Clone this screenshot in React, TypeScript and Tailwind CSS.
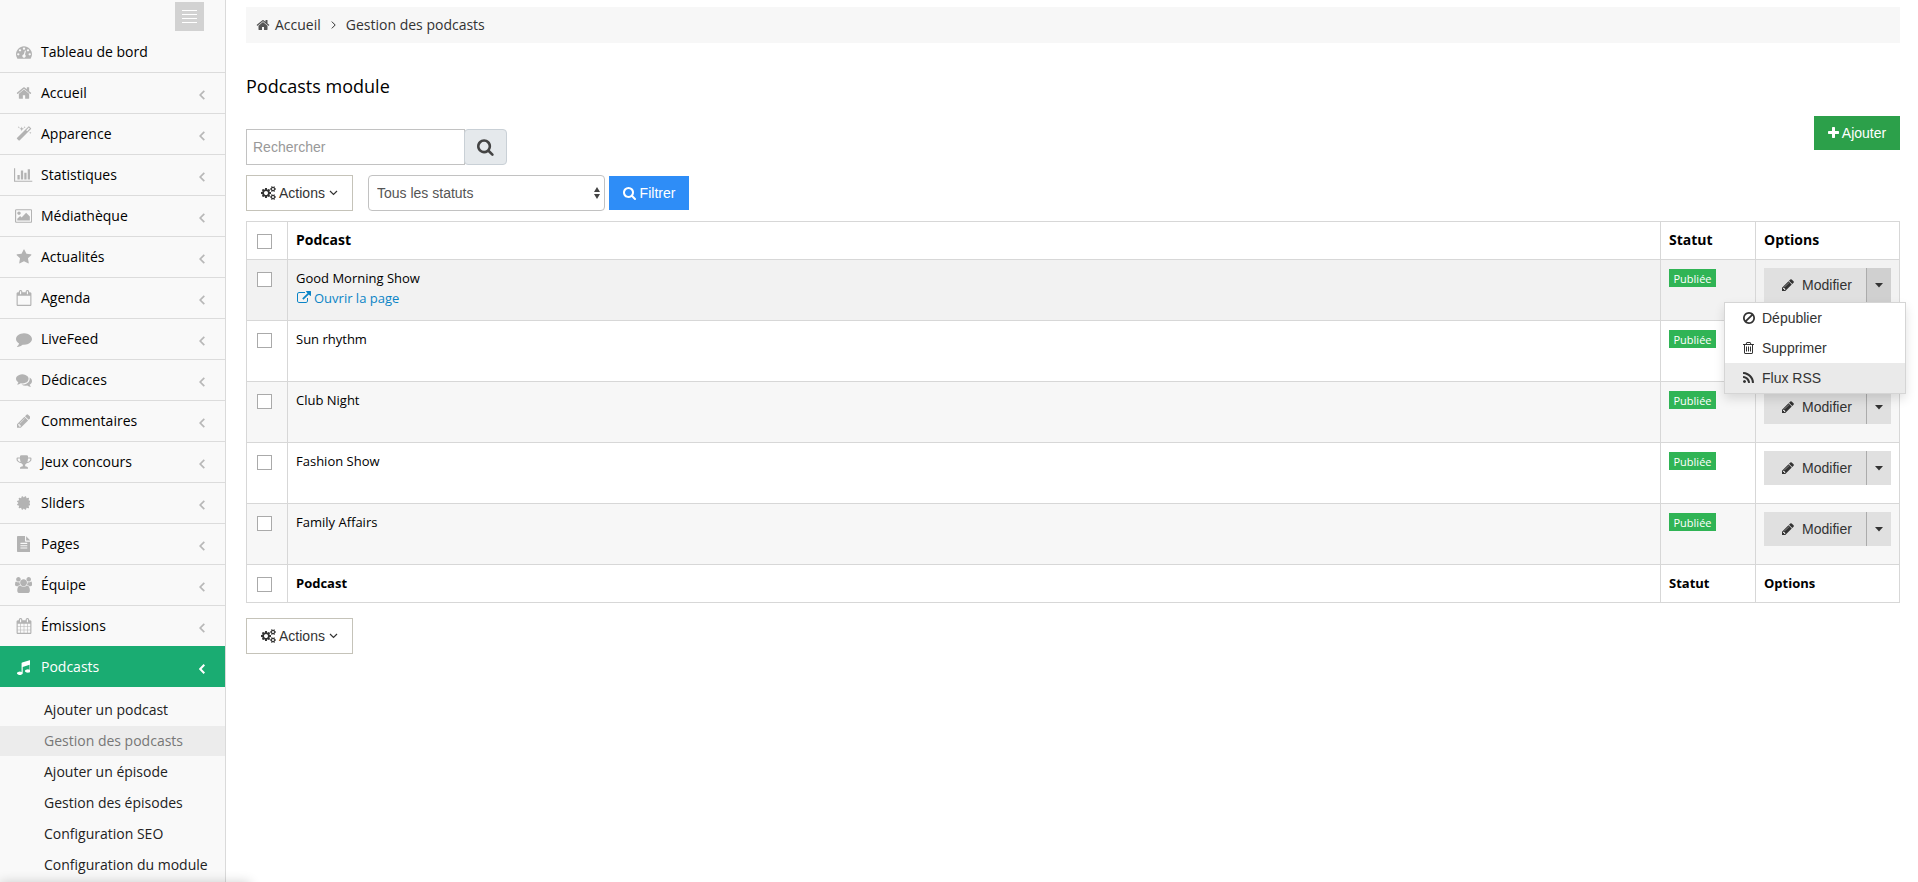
import type { ReactNode } from "react";

// Font Awesome 4 outlines: [viewBox min-x, viewBox width, path]. 1792 units = 1em.
const ICONS = {
  dashboard: [0, 1792, "M384 1152q0-53-37.5-90.5t-90.5-37.5-90.5 37.5-37.5 90.5 37.5 90.5 90.5 37.5 90.5-37.5 37.5-90.5zm192-448q0-53-37.5-90.5t-90.5-37.5-90.5 37.5-37.5 90.5 37.5 90.5 90.5 37.5 90.5-37.5 37.5-90.5zm428 481l101-382q6-26-7.5-48.5t-38.5-29.5-48 6.5-30 39.5l-101 382q-60 5-107 43.5t-63 98.5q-20 77 20 146t117 89 146-20 89-117q16-60-6-117t-72-91zm660-33q0-53-37.5-90.5t-90.5-37.5-90.5 37.5-37.5 90.5 37.5 90.5 90.5 37.5 90.5-37.5 37.5-90.5zm-640-640q0-53-37.5-90.5t-90.5-37.5-90.5 37.5-37.5 90.5 37.5 90.5 90.5 37.5 90.5-37.5 37.5-90.5zm448 192q0-53-37.5-90.5t-90.5-37.5-90.5 37.5-37.5 90.5 37.5 90.5 90.5 37.5 90.5-37.5 37.5-90.5zm320 448q0 261-141 483-19 29-54 29h-1402q-35 0-54-29-141-221-141-483 0-182 71-348t191-286 286-191 348-71 348 71 286 191 191 286 71 348z"],
  home: [0, 1792, "M1472 992v480q0 26-19 45t-45 19h-384v-384h-256v384h-384q-26 0-45-19t-19-45v-480q0-1 .5-3t.5-3l575-474 575 474q1 2 1 6zm223-69l-62 74q-8 9-21 11h-3q-13 0-21-7l-692-577-692 577q-12 8-24 7-13-2-21-11l-62-74q-8-10-7-23.5t11-21.5l719-599q32-26 76-26t76 26l244 204v-195q0-14 9-23t23-9h192q14 0 23 9t9 23v408l219 182q10 8 11 21.5t-7 23.5z"],
  magic: [0, 1792, "M1254 581l293-293-107-107-293 293zm447-293q0 27-18 45l-1286 1286q-18 18-45 18t-45-18l-198-198q-18-18-18-45t18-45l1286-1286q18-18 45-18t45 18l198 198q18 18 18 45zm-1351-190l98 30-98 30-30 98-30-98-98-30 98-30 30-98zm350 162l196 60-196 60-60 196-60-196-196-60 196-60 60-196zm930 478l98 30-98 30-30 98-30-98-98-30 98-30 30-98zm-640-640l98 30-98 30-30 98-30-98-98-30 98-30 30-98z"],
  chart: [0, 2048, "M640 896v512h-256v-512h256zm384-512v1024h-256v-1024h256zm1024 1152v128h-2048v-1536h128v1408h1920zm-640-896v768h-256v-768h256zm384-384v1152h-256v-1152h256z"],
  image: [-64, 1920, "M576 576q0 80-56 136t-136 56-136-56-56-136 56-136 136-56 136 56 56 136zm1024 384v448h-1408v-192l320-320 160 160 512-512zm96-704h-1600q-13 0-22.5 9.5t-9.5 22.5v1216q0 13 9.5 22.5t22.5 9.5h1600q13 0 22.5-9.5t9.5-22.5v-1216q0-13-9.5-22.5t-22.5-9.5zm160 32v1216q0 66-47 113t-113 47h-1600q-66 0-113-47t-47-113v-1216q0-66 47-113t113-47h1600q66 0 113 47t47 113z"],
  star: [0, 1792, "M1728 647q0 22-26 48l-363 354 86 500q1 7 1 20 0 21-10.5 35.5t-30.5 14.5q-19 0-40-12l-449-236-449 236q-22 12-40 12-21 0-31.5-14.5t-10.5-35.5q0-6 2-20l86-500-364-354q-25-27-25-48 0-37 56-46l502-73 225-455q19-41 49-41t49 41l225 455 502 73q56 9 56 46z"],
  calendarEmpty: [0, 1792, "M192 1664h1408v-1024h-1408v1024zm384-1216v-288q0-14-9-23t-23-9h-64q-14 0-23 9t-9 23v288q0 14 9 23t23 9h64q14 0 23-9t9-23zm768 0v-288q0-14-9-23t-23-9h-64q-14 0-23 9t-9 23v288q0 14 9 23t23 9h64q14 0 23-9t9-23zm384-64v1280q0 52-38 90t-90 38h-1408q-52 0-90-38t-38-90v-1280q0-52 38-90t90-38h128v-96q0-66 47-113t113-47h64q66 0 113 47t47 113v96h384v-96q0-66 47-113t113-47h64q66 0 113 47t47 113v96h128q52 0 90 38t38 90z"],
  comment: [0, 1792, "M1792 896q0 174-120 321.5t-326 233-450 85.5q-70 0-145-8-198 175-460 242-49 14-114 22-17 2-30.5-9t-17.5-29v-1q-3-4-.5-12t2-10 4.5-9.5l6-9 7-8.5 8-9q7-8 31-34.5t34.5-38 31-39.5 32.5-51 27-59 26-76q-157-89-247.5-220t-90.5-281q0-130 71-248.5t191-204.5 286-136.5 348-50.5q244 0 450 85.5t326 233 120 321.5z"],
  comments: [0, 1792, "M1408 768q0 139-94 257t-256.5 186.5-353.5 68.5q-86 0-176-16-124 88-278 128-36 9-86 16h-3q-11 0-20.5-8t-11.5-21q-1-3-1-6.5t.5-6.5 2-6l2.5-5 3.5-5.5 4-5 4.5-5 4-4.5q5-6 23-25t26-29.5 22.5-29 25-38.5 20.5-44q-124-72-195-177t-71-224q0-139 94-257t256.5-186.5 353.5-68.5 353.5 68.5 256.5 186.5 94 257zm384 256q0 120-71 224.5t-195 176.5q10 24 20.5 44t25 38.5 22.5 29 26 29.5 23 25q1 1 4 4.5t4.5 5 4 5 3.5 5.5l2.5 5 2 6 .5 6.5-1 6.5q-3 14-13 22t-22 7q-50-7-86-16-154-40-278-128-90 16-176 16-271 0-472-132 58 4 88 4 161 0 309-45t264-129q125-92 192-212t67-254q0-77-23-152 129 71 204 178t75 230z"],
  pencil: [128, 1536, "M491 1536l91-91-235-235-91 91v107h128v128h107zm523-928q0-22-22-22-10 0-17 7l-542 542q-7 7-7 17 0 22 22 22 10 0 17-7l542-542q7-7 7-17zm-54-192l416 416-832 832h-416v-416zm683 96q0 53-37 90l-166 166-416-416 166-165q36-38 90-38 53 0 91 38l235 234q37 39 37 91z"],
  trophy: [0, 1792, "M522 883q-74-162-74-371h-256v96q0 78 94.5 162t235.5 113zm1078-275v-96h-256q0 209-74 371 141-29 235.5-113t94.5-162zm128-128v128q0 71-41.5 143t-112 130-173 97.5-215.5 44.5q-42 54-95 95-38 34-52.5 72.5t-14.5 89.5q0 54 30.5 91t97.5 37q75 0 133.5 45.5t58.5 114.5v64q0 14-9 23t-23 9h-832q-14 0-23-9t-9-23v-64q0-69 58.5-114.5t133.5-45.5q67 0 97.5-37t30.5-91q0-51-14.5-89.5t-52.5-72.5q-53-41-95-95-113-5-215.5-44.5t-173-97.5-112-130-41.5-143v-128q0-40 28-68t68-28h288v-96q0-66 47-113t113-47h576q66 0 113 47t47 113v96h288q40 0 68 28t28 68z"],
  certificate: [128, 1536, "M1504 896l138 135q30 28 20 70-12 41-52 51l-188 48 53 186q12 41-19 70-29 31-70 19l-186-53-48 188q-10 40-51 52-12 2-19 2-31 0-51-22l-135-138-135 138q-28 30-70 20-41-11-51-52l-48-188-186 53q-41 12-70-19-31-29-19-70l53-186-188-48q-40-10-52-51-10-42 20-70l138-135-138-135q-30-28-20-70 12-41 52-51l188-48-53-186q-12-41 19-70 29-31 70-19l186 53 48-188q10-41 51-51 41-12 70 19l135 139 135-139q29-30 70-19 41 10 51 51l48 188 186-53q41-12 70 19 31 29 19 70l-53 186 188 48q40 10 52 51 10 42-20 70z"],
  file: [128, 1536, "M1596 476q14 14 28 36h-472v-472q22 14 36 28zm-476 164h544v1056q0 40-28 68t-68 28h-1344q-40 0-68-28t-28-68v-1600q0-40 28-68t68-28h800v544q0 40 28 68t68 28zm160 736v-64q0-14-9-23t-23-9h-704q-14 0-23 9t-9 23v64q0 14 9 23t23 9h704q14 0 23-9t9-23zm0-256v-64q0-14-9-23t-23-9h-704q-14 0-23 9t-9 23v64q0 14 9 23t23 9h704q14 0 23-9t9-23zm0-256v-64q0-14-9-23t-23-9h-704q-14 0-23 9t-9 23v64q0 14 9 23t23 9h704q14 0 23-9t9-23z"],
  users: [-64, 1920, "M529 896q-162 5-265 128h-134q-82 0-138-40.5t-56-118.5q0-353 124-353 6 0 43.5 21t97.5 42.5 119 21.5q67 0 133-23-5 37-5 66 0 139 81 256zm1071 637q0 120-73 189.5t-194 69.5h-874q-121 0-194-69.5t-73-189.5q0-53 3.5-103.5t14-109 26.5-108.5 43-97.5 62-81 85.5-53.5 111.5-20q10 0 43 21.5t73 48 107 48 135 21.5 135-21.5 107-48 73-48 43-21.5q61 0 111.5 20t85.5 53.5 62 81 43 97.5 26.5 108.5 14 109 3.5 103.5zm-1024-1277q0 106-75 181t-181 75-181-75-75-181 75-181 181-75 181 75 75 181zm704 384q0 159-112.5 271.5t-271.5 112.5-271.5-112.5-112.5-271.5 112.5-271.5 271.5-112.5 271.5 112.5 112.5 271.5zm576 225q0 78-56 118.5t-138 40.5h-134q-103-123-265-128 81-117 81-256 0-29-5-66 66 23 133 23 59 0 119-21.5t97.5-42.5 43.5-21q124 0 124 353zm-128-609q0 106-75 181t-181 75-181-75-75-181 75-181 181-75 181 75 75 181z"],
  calendar: [0, 1792, "M192 1664h288v-288h-288v288zm352 0h320v-288h-320v288zm-352-352h288v-320h-288v320zm352 0h320v-320h-320v320zm-352-384h288v-288h-288v288zm736 736h320v-288h-320v288zm-384-736h320v-288h-320v288zm768 736h288v-288h-288v288zm-384-352h320v-320h-320v320zm-352-864v-288q0-13-9.5-22.5t-22.5-9.5h-64q-13 0-22.5 9.5t-9.5 22.5v288q0 13 9.5 22.5t22.5 9.5h64q13 0 22.5-9.5t9.5-22.5zm736 864h288v-320h-288v320zm-384-384h320v-288h-320v288zm384 0h288v-288h-288v288zm32-480v-288q0-13-9.5-22.5t-22.5-9.5h-64q-13 0-22.5 9.5t-9.5 22.5v288q0 13 9.5 22.5t22.5 9.5h64q13 0 22.5-9.5t9.5-22.5zm384-64v1280q0 52-38 90t-90 38h-1408q-52 0-90-38t-38-90v-1280q0-52 38-90t90-38h128v-96q0-66 47-113t113-47h64q66 0 113 47t47 113v96h384v-96q0-66 47-113t113-47h64q66 0 113 47t47 113v96h128q52 0 90 38t38 90z"],
  music: [128, 1536, "M1664 224v1120q0 50-34 89t-86 60.5-103.5 32-96.5 10.5-96.5-10.5-103.5-32-86-60.5-34-89 34-89 86-60.5 103.5-32 96.5-10.5q105 0 192 39v-537l-768 237v709q0 50-34 89t-86 60.5-103.5 32-96.5 10.5-96.5-10.5-103.5-32-86-60.5-34-89 34-89 86-60.5 103.5-32 96.5-10.5q105 0 192 39v-967q0-31 19-56.5t49-35.5l832-256q12-4 28-4 40 0 68 28t28 68z"],
  search: [64, 1664, "M1216 832q0-185-131.5-316.5t-316.5-131.5-316.5 131.5-131.5 316.5 131.5 316.5 316.5 131.5 316.5-131.5 131.5-316.5zm512 832q0 52-38 90t-90 38q-54 0-90-38l-343-342q-179 124-399 124-143 0-273.5-55.5t-225-150-150-225-55.5-273.5 55.5-273.5 150-225 225-150 273.5-55.5 273.5 55.5 225 150 150 225 55.5 273.5q0 220-124 399l343 343q37 37 37 90z"],
  plus: [192, 1408, "M1600 736v192q0 40-28 68t-68 28h-416v416q0 40-28 68t-68 28h-192q-40 0-68-28t-28-68v-416h-416q-40 0-68-28t-28-68v-192q0-40 28-68t68-28h416v-416q0-40 28-68t68-28h192q40 0 68 28t28 68v416h416q40 0 68 28t28 68z"],
  external: [0, 1792, "M1408 928v320q0 119-84.5 203.5t-203.5 84.5h-832q-119 0-203.5-84.5t-84.5-203.5v-832q0-119 84.5-203.5t203.5-84.5h704q14 0 23 9t9 23v64q0 14-9 23t-23 9h-704q-66 0-113 47t-47 113v832q0 66 47 113t113 47h832q66 0 113-47t47-113v-320q0-14 9-23t23-9h64q14 0 23 9t9 23zm384-864v512q0 26-19 45t-45 19-45-19l-176-176-652 652q-10 10-23 10t-23-10l-114-114q-10-10-10-23t10-23l652-652-176-176q-19-19-19-45t19-45 45-19h512q26 0 45 19t19 45z"],
  cogs: [-64, 1920, "M832 896q0-106-75-181t-181-75-181 75-75 181 75 181 181 75 181-75 75-181zm768 512q0-52-38-90t-90-38-90 38-38 90q0 53 37.5 90.5t90.5 37.5 90.5-37.5 37.5-90.5zm0-1024q0-52-38-90t-90-38-90 38-38 90q0 53 37.5 90.5t90.5 37.5 90.5-37.5 37.5-90.5zm-384 421v185q0 10-7 19.5t-16 10.5l-155 24q-11 35-32 76 34 48 90 115 7 11 7 20 0 12-7 19-23 30-82.5 89.5t-78.5 59.5q-11 0-21-7l-115-90q-37 19-77 31-11 108-23 155-7 24-30 24h-186q-11 0-20-7.5t-10-17.5l-23-153q-34-10-75-31l-118 89q-7 7-20 7-11 0-21-8-144-133-144-160 0-9 7-19 10-14 41-53t47-61q-23-44-35-82l-152-24q-10-1-17-9.5t-7-19.5v-185q0-10 7-19.5t16-10.5l155-24q11-35 32-76-34-48-90-115-7-11-7-20 0-12 7-20 22-30 82-89t79-59q11 0 21 7l115 90q34-18 77-32 11-108 23-154 7-24 30-24h186q11 0 20 7.5t10 17.5l23 153q34 10 75 31l118-89q8-7 20-7 11 0 21 8 144 133 144 160 0 8-7 19-12 16-42 54t-45 60q23 48 34 82l152 23q10 2 17 10.5t7 19.5zm640 533v140q0 16-149 31-12 27-30 52 51 113 51 138 0 4-4 7-122 71-124 71-8 0-46-47t-52-68q-20 2-30 2t-30-2q-14 21-52 68t-46 47q-2 0-124-71-4-3-4-7 0-25 51-138-18-25-30-52-149-15-149-31v-140q0-16 149-31 13-29 30-52-51-113-51-138 0-4 4-7 4-2 35-20t59-34 30-16q8 0 46 46.5t52 67.5q20-2 30-2t30 2q51-71 92-112l6-2q4 0 124 70 4 3 4 7 0 25-51 138 17 23 30 52 149 15 149 31zm0-1024v140q0 16-149 31-12 27-30 52 51 113 51 138 0 4-4 7-122 71-124 71-8 0-46-47t-52-68q-20 2-30 2t-30-2q-14 21-52 68t-46 47q-2 0-124-71-4-3-4-7 0-25 51-138-18-25-30-52-149-15-149-31v-140q0-16 149-31 13-29 30-52-51-113-51-138 0-4 4-7 4-2 35-20t59-34 30-16q8 0 46 46.5t52 67.5q20-2 30-2t30 2q51-71 92-112l6-2q4 0 124 70 4 3 4 7 0 25-51 138 17 23 30 52 149 15 149 31z"],
  ban: [128, 1536, "M1440 893q0-161-87-295l-754 753q137 89 297 89 111 0 211.5-43.5t173.5-116.5 116-174.5 43-212.5zm-999 299l755-754q-135-91-300-91-148 0-273 73t-198 199-73 274q0 162 89 299zm1223-299q0 157-61 300t-163.5 246-245 164-298.5 61-298.5-61-245-164-163.5-246-61-300 61-299.5 163.5-245.5 245-164 298.5-61 298.5 61 245 164 163.5 245.5 61 299.5z"],
  trash: [192, 1408, "M704 736v576q0 14-9 23t-23 9h-64q-14 0-23-9t-9-23v-576q0-14 9-23t23-9h64q14 0 23 9t9 23zm256 0v576q0 14-9 23t-23 9h-64q-14 0-23-9t-9-23v-576q0-14 9-23t23-9h64q14 0 23 9t9 23zm256 0v576q0 14-9 23t-23 9h-64q-14 0-23-9t-9-23v-576q0-14 9-23t23-9h64q14 0 23 9t9 23zm128 724v-948h-896v948q0 22 7 40.5t14.5 27 10.5 8.5h832q3 0 10.5-8.5t14.5-27 7-40.5zm-672-1076h448l-48-117q-7-9-17-11h-317q-10 2-17 11zm928 32v64q0 14-9 23t-23 9h-96v948q0 83-47 143.5t-113 60.5h-832q-66 0-113-58.5t-47-141.5v-952h-96q-14 0-23-9t-9-23v-64q0-14 9-23t23-9h309l70-167q15-37 54-63t79-26h320q40 0 79 26t54 63l70 167h309q14 0 23 9t9 23z"],
  rss: [192, 1408, "M576 1344q0 80-56 136t-136 56-136-56-56-136 56-136 136-56 136 56 56 136zm512 123q2 28-17 48-18 21-47 21h-135q-25 0-43-16.5t-20-41.5q-22-229-184.5-391.5t-391.5-184.5q-25-2-41.5-20t-16.5-43v-135q0-29 21-47 17-17 43-17h5q160 13 306 80.5t259 181.5q114 113 181.5 259t80.5 306zm512 2q2 27-18 47-18 20-46 20h-143q-26 0-44.5-17.5t-19.5-42.5q-12-215-101-408.5t-231.5-336-336-231.5-408.5-102q-25-1-42.5-19.5t-17.5-43.5v-143q0-28 20-46 18-18 44-18h3q262 13 501.5 120t425.5 294q187 186 294 425.5t120 501.5z"],
} satisfies Record<string, [number, number, string]>;

type IconName = keyof typeof ICONS;

function Icon({ name, size = 14, className = "" }: { name: IconName; size?: number; className?: string }) {
  const [x, width, d] = ICONS[name];
  return (
    <svg
      viewBox={`${x} 0 ${width} 1792`}
      width={(size * width) / 1792}
      height={size}
      fill="currentColor"
      aria-hidden="true"
      className={`shrink-0 ${className}`}
    >
      <path d={d} />
    </svg>
  );
}

const MENU: { label: string; icon: IconName }[] = [
  { label: "Tableau de bord", icon: "dashboard" },
  { label: "Accueil", icon: "home" },
  { label: "Apparence", icon: "magic" },
  { label: "Statistiques", icon: "chart" },
  { label: "Médiathèque", icon: "image" },
  { label: "Actualités", icon: "star" },
  { label: "Agenda", icon: "calendarEmpty" },
  { label: "LiveFeed", icon: "comment" },
  { label: "Dédicaces", icon: "comments" },
  { label: "Commentaires", icon: "pencil" },
  { label: "Jeux concours", icon: "trophy" },
  { label: "Sliders", icon: "certificate" },
  { label: "Pages", icon: "file" },
  { label: "Équipe", icon: "users" },
  { label: "Émissions", icon: "calendar" },
  { label: "Podcasts", icon: "music" },
];

const SUBMENU = [
  "Ajouter un podcast",
  "Gestion des podcasts",
  "Ajouter un épisode",
  "Gestion des épisodes",
  "Configuration SEO",
  "Configuration du module",
];

const PODCASTS = ["Good Morning Show", "Sun rhythm", "Club Night", "Fashion Show", "Family Affairs"];

const ROW_ACTIONS: { label: string; icon: IconName }[] = [
  { label: "Dépublier", icon: "ban" },
  { label: "Supprimer", icon: "trash" },
  { label: "Flux RSS", icon: "rss" },
];

function Sidebar() {
  return (
    <aside className="w-[226px] shrink-0 border-r border-[#dadada] bg-[#f9f9f9]">
      <div className="flex h-8 justify-end pt-0.5 pr-[21px]">
        <button
          type="button"
          aria-label="Réduire le menu"
          className="flex size-[29px] flex-col items-center justify-center gap-[3px] bg-[#d2d2d2]"
        >
          <span className="h-px w-[15px] bg-white" />
          <span className="h-px w-[15px] bg-white" />
          <span className="h-px w-[15px] bg-white" />
          <span className="h-px w-[15px] bg-white" />
        </button>
      </div>
      <nav>
        <ul>
          {MENU.map(({ label, icon }, i) => {
            const active = label === "Podcasts";
            return (
              <li key={label}>
                <a
                  href="#"
                  className={`flex items-center pr-5 pl-3.5 text-sm ${i === 0 ? "h-10" : "h-[41px] border-t"} ${
                    active ? "border-[#1aac72] bg-[#1aac72] text-white" : "border-[#dcdcdc] text-black"
                  }`}
                >
                  <span className={`mr-2 flex w-[19px] justify-center ${active ? "text-white" : "text-[#b3b3b3]"}`}>
                    <Icon name={icon} size={16} />
                  </span>
                  {label}
                  {i > 0 && (
                    <svg
                      viewBox="0 0 6 10"
                      className={`mt-1 ml-auto h-2.5 w-1.5 ${active ? "text-white" : "text-[#b8b8b8]"}`}
                      fill="none"
                      stroke="currentColor"
                      strokeWidth={active ? 2 : 1.7}
                      aria-hidden="true"
                    >
                      <path d="M5.3.8 1.2 5l4.1 4.2" />
                    </svg>
                  )}
                </a>
              </li>
            );
          })}
        </ul>
        <ul className="flex flex-col gap-px pt-2">
          {SUBMENU.map((label) => (
            <li key={label}>
              <a
                href="#"
                className={`flex h-[30px] items-center pl-11 text-sm ${
                  label === "Gestion des podcasts" ? "bg-[#ececec] text-[#777]" : "text-[#222]"
                }`}
              >
                {label}
              </a>
            </li>
          ))}
        </ul>
      </nav>
    </aside>
  );
}

function ActionsButton() {
  return (
    <button
      type="button"
      className="flex h-9 w-[107px] items-center justify-center gap-[3px] border border-[#c5c3b9] bg-white font-[Liberation_Sans,sans-serif] text-sm text-[#333]"
    >
      <Icon name="cogs" />
      Actions
      <svg viewBox="0 0 9 6" className="ml-px h-1.5 w-[9px]" fill="none" stroke="currentColor" strokeWidth="1.2" aria-hidden="true">
        <path d="M1 1l3.5 3.5L8 1" />
      </svg>
    </button>
  );
}

function CheckCell({ label }: { label: string }) {
  return (
    <td className="border border-[#d7d7d7] pt-3 pl-2.5 align-top">
      <input
        type="checkbox"
        aria-label={label}
        className="block size-[15px] appearance-none border border-[#aaa] bg-white checked:bg-[#1aac72]"
      />
    </td>
  );
}

function TitleCell({ children }: { children: ReactNode }) {
  return (
    <th scope="col" className="border border-[#d7d7d7] px-2 pt-2 text-left align-top font-[inherit]">
      {children}
    </th>
  );
}

function RowOptions({ open }: { open: boolean }) {
  return (
    <div className="relative flex h-[34px] w-[127px] font-[Liberation_Sans,sans-serif] text-sm text-[#333]">
      <button type="button" className="flex flex-1 items-center justify-center gap-2 bg-[#e0e0e0] pl-1">
        <Icon name="pencil" />
        Modifier
      </button>
      <button
        type="button"
        aria-label="Plus d'options"
        aria-expanded={open}
        className={`flex w-[25px] items-center justify-center border-l border-[#ababab] ${
          open ? "bg-[#d0d0d0]" : "bg-[#e0e0e0]"
        }`}
      >
        <svg viewBox="0 0 8 5" className="h-[5px] w-2" fill="currentColor" aria-hidden="true">
          <path d="M0 0h8L4 4.5z" />
        </svg>
      </button>
      {open && (
        <ul className="absolute top-full -right-[15px] z-10 w-[182px] border border-[#d5d5d5] bg-white shadow-[0_5px_10px_rgba(0,0,0,0.12)]">
          {ROW_ACTIONS.map(({ label, icon }) => (
            <li key={label}>
              <a
                href="#"
                className={`flex h-[30px] items-center pl-[17px] ${label === "Flux RSS" ? "bg-[#eaeaea]" : ""}`}
              >
                <span className="mr-[7px] flex w-[13px] justify-center">
                  <Icon name={icon} />
                </span>
                {label}
              </a>
            </li>
          ))}
        </ul>
      )}
    </div>
  );
}

function PodcastTable() {
  return (
    <table className="mt-2.5 w-full table-fixed border-collapse text-[13px] leading-5 text-black">
      <colgroup>
        <col className="w-[41px]" />
        <col />
        <col className="w-[95px]" />
        <col className="w-[144px]" />
      </colgroup>
      <thead>
        <tr className="h-[38px] text-sm font-semibold">
          <CheckCell label="Tout sélectionner" />
          <TitleCell>Podcast</TitleCell>
          <TitleCell>Statut</TitleCell>
          <TitleCell>Options</TitleCell>
        </tr>
      </thead>
      <tbody>
        {PODCASTS.map((name, i) => (
          <tr key={name} className={`h-[61px] ${i === 0 ? "bg-[#f2f2f2]" : i % 2 ? "bg-white" : "bg-[#f7f7f7]"}`}>
            <CheckCell label={name} />
            <td className="border border-[#d7d7d7] px-2 pt-2 align-top">
              {name}
              {i === 0 && (
                <a href="#" className="flex items-center gap-[3px] text-[#0a84c6]">
                  <Icon name="external" className="ml-px" />
                  Ouvrir la page
                </a>
              )}
            </td>
            <td className="border border-[#d7d7d7] px-2 pt-[9px] align-top">
              <span className="flex h-[18px] w-[47px] items-center justify-center bg-[#30b455] pt-px text-[11px] text-white">
                Publiée
              </span>
            </td>
            <td className="border border-[#d7d7d7] px-2 pt-2 align-top">
              <RowOptions open={i === 0} />
            </td>
          </tr>
        ))}
      </tbody>
      <tfoot>
        <tr className="h-[38px] font-bold">
          <CheckCell label="Tout sélectionner" />
          <TitleCell>Podcast</TitleCell>
          <TitleCell>Statut</TitleCell>
          <TitleCell>Options</TitleCell>
        </tr>
      </tfoot>
    </table>
  );
}

export default function App() {
  return (
    <div className="flex min-h-screen overflow-hidden bg-white font-[Open_Sans,sans-serif] text-sm">
      <Sidebar />

      <main className="min-w-0 flex-1 pt-[7px] pr-[18px] pl-5">
        <nav aria-label="Fil d'Ariane" className="flex h-9 items-center bg-[#f7f7f7] pl-2.5 text-[#333]">
          <Icon name="home" className="mr-[5px] text-[#555]" />
          <a href="#">Accueil</a>
          <svg viewBox="0 0 5 8" className="mx-2.5 h-2 w-[5px]" fill="none" stroke="currentColor" aria-hidden="true">
            <path d="M.8.6 4.2 4 .8 7.4" />
          </svg>
          <a href="#">Gestion des podcasts</a>
        </nav>

        <h1 className="mt-[29px] mb-4 text-lg leading-7 text-black">Podcasts module</h1>

        <div className="flex items-start justify-between font-[Liberation_Sans,sans-serif]">
          <div className="flex flex-col gap-2.5 pt-[13px]">
            <form className="flex">
              <input
                type="text"
                placeholder="Rechercher"
                aria-label="Rechercher"
                className="h-9 w-[219px] border border-[#c2c2c2] px-1.5 placeholder:text-[#999]"
              />
              <button
                type="submit"
                aria-label="Lancer la recherche"
                className="-ml-px flex h-9 w-[43px] items-center justify-center rounded border border-[#c9d0d6] bg-[#e5e9ec] text-[#444]"
              >
                <Icon name="search" size={18} />
              </button>
            </form>
            <div className="flex items-center">
              <ActionsButton />
              <div className="relative mr-1 ml-[15px]">
                <select
                  aria-label="Statut"
                  className="h-9 w-[237px] appearance-none rounded border border-[#c2c2c2] bg-white px-2 text-[#555]"
                >
                  <option>Tous les statuts</option>
                  <option>Publiée</option>
                </select>
                <svg
                  viewBox="0 0 6 12"
                  className="pointer-events-none absolute top-3 right-[5px] h-3 w-1.5 text-[#444]"
                  fill="currentColor"
                  aria-hidden="true"
                >
                  <path d="M0 5l3-5 3 5zM0 7l3 5 3-5z" />
                </svg>
              </div>
              <button
                type="button"
                className="flex h-[34px] w-20 items-center justify-center gap-1 bg-[#2e8df7] text-white"
              >
                <Icon name="search" />
                Filtrer
              </button>
            </div>
          </div>
          <button
            type="button"
            className="flex h-[34px] w-[86px] items-center justify-center gap-[3px] bg-[#2ca04a] text-white"
          >
            <Icon name="plus" />
            Ajouter
          </button>
        </div>

        <PodcastTable />

        <div className="mt-[15px]">
          <ActionsButton />
        </div>
      </main>

      {/* soft glow of the status bubble tucked under the bottom-left corner */}
      <div className="fixed top-full left-0 h-6 w-[250px] shadow-[0_0_12px_rgba(0,0,0,0.18)]" aria-hidden="true" />
    </div>
  );
}
